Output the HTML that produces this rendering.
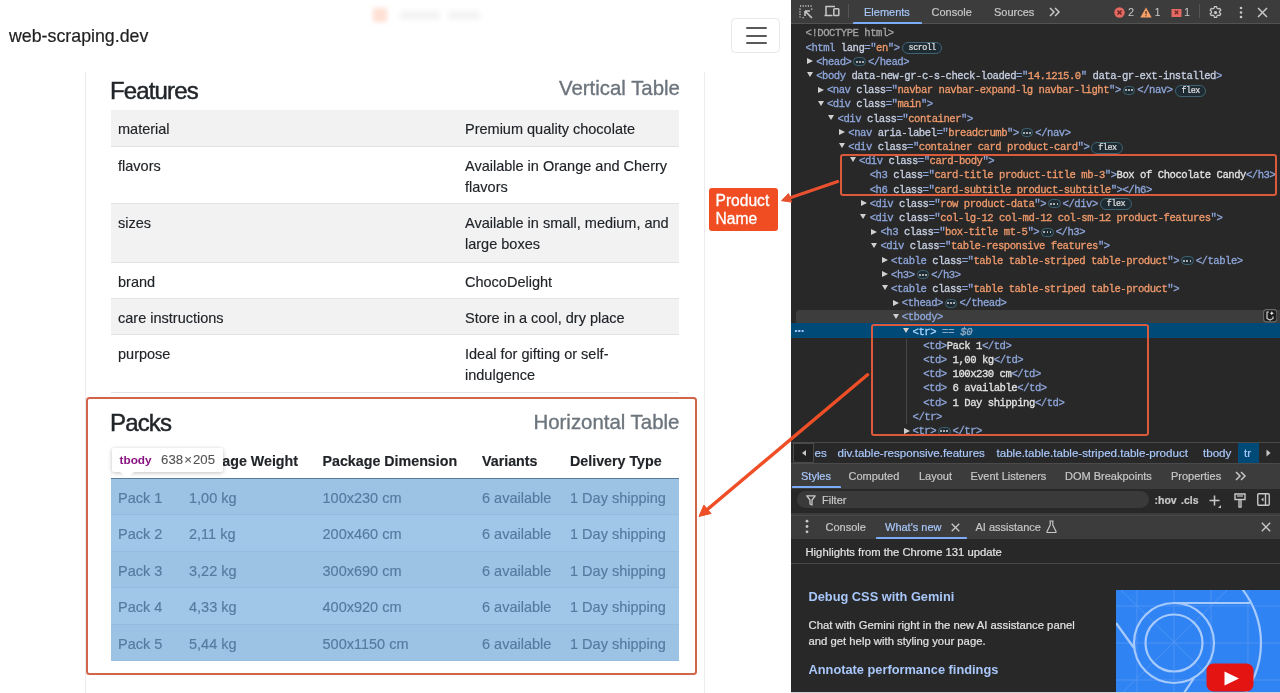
<!DOCTYPE html>
<html><head><meta charset="utf-8">
<style>
*{box-sizing:border-box;margin:0;padding:0}
html,body{width:1280px;height:693px;overflow:hidden;background:#fff}
body{position:relative;font-family:"Liberation Sans",sans-serif;color:#212529}
.a{position:absolute;white-space:pre}
#page{will-change:transform;position:absolute;left:0;top:0;width:791px;height:693px;background:#fff;overflow:hidden}
.brand{left:9px;top:25px;font-size:17.8px;line-height:22px;color:#1f1f1f;-webkit-text-stroke:0.2px currentColor}
.burger{left:731px;top:17.5px;width:49px;height:35px;border:1px solid #e8e8e8;border-radius:4.5px}
.burger i{position:absolute;left:13.5px;width:21px;height:2px;background:#5a5a5a;border-radius:1px}
.cardl{left:85px;top:72px;width:1px;height:621px;background:#ececec}
.cardr{left:703.5px;top:72px;width:1px;height:621px;background:#ececec}
.h3{font-size:24px;line-height:28px;letter-spacing:-0.85px;color:#212529;-webkit-text-stroke:0.45px currentColor}
.h4{font-size:20.4px;line-height:24px;color:#6c757d;-webkit-text-stroke:0.35px currentColor}
.tbl{left:111px;width:567.5px}
.row{position:absolute;left:0;width:567.5px;border-bottom:1px solid #e3e3e3}
.row.s{background:#f2f2f2}
.c{position:absolute;font-size:14.5px;line-height:21px;color:#212529;white-space:pre;-webkit-text-stroke:0.15px currentColor}
.hd{font-weight:bold;font-size:14.25px}
.pk{color:#557b9e}
.tb .row{border-bottom:1px solid #dee2e6}
.ov{position:absolute;left:0;top:0;width:100%;height:100%;background:rgba(111,168,220,.66)}
.pk{z-index:2}
.tip{background:#fff;border-radius:2px;box-shadow:0 1px 4px rgba(0,0,0,.25);font-size:11.8px;line-height:24px;padding-left:8px;z-index:5}
.tip b{color:#881280;font-weight:bold;margin-right:9.5px}
.tip span{color:#555;font-size:13.2px;-webkit-text-stroke:0.1px currentColor}
.tip:after{content:"";position:absolute;left:8.5px;top:24px;border:7.5px solid transparent;border-top:6.8px solid #fff;border-bottom:0}
.redbox{border:2px solid #d2644a;border-radius:3.5px;z-index:6}
.label{background:#f04d22;color:#fff;border-radius:3px;font-size:15.6px;line-height:18px;padding:3.5px 0 0 6.5px;z-index:6;-webkit-text-stroke:0.3px currentColor}

#dt{will-change:transform;position:absolute;left:791px;top:0;width:489px;height:693px;background:#282828;overflow:hidden;font-family:"Liberation Sans",sans-serif}
#dt .ic{position:absolute}
.tb1{position:absolute;left:0;top:0;width:489px;height:23.5px;background:#3c3c3c;border-bottom:1px solid #525252}
.sep{position:absolute;width:1px;background:#555}
.tab{position:absolute;font-size:11px;line-height:13px;color:#c7c7c7;white-space:pre;-webkit-text-stroke:0.2px currentColor}
.tab.act{color:#a8c7fa}
.tab.sm{font-size:10.5px;font-weight:bold}
.uline{position:absolute;height:2px;background:#7cacf8;border-radius:1px 1px 0 0}
.cnt{position:absolute;font-size:11px;line-height:13px;color:#c7c7c7}
#tree{position:absolute;left:-791px;top:0;width:1280px;height:693px}
.ln{position:absolute;left:791px;width:489px;height:14.2px}
.ln.hov{background:#3d3d3d;top:310.1px!important;height:12.5px;left:795.5px;border-radius:4px 0 0 0}
.ln.sel{background:#004a77;top:322.5px!important;height:15.8px}
.seldots{position:absolute;left:795px;top:330px;width:9px;height:2.2px;background:radial-gradient(circle at 1.1px 1.1px,#a8c7fa 1px,transparent 1.2px) 0 0/3.3px 2.2px repeat-x;z-index:2}
.tr{position:absolute;width:0;height:0;border-left:6px solid #d0d0d0;border-top:3.6px solid transparent;border-bottom:3.6px solid transparent}
.td{position:absolute;width:0;height:0;border-top:5.6px solid #d0d0d0;border-left:3.4px solid transparent;border-right:3.4px solid transparent}
.code{position:absolute;font-family:"Liberation Mono",monospace;font-size:10.6px;letter-spacing:-0.48px;line-height:14.2px;-webkit-text-stroke:0.3px currentColor;white-space:pre;color:#e3e3e3}
.code .t{color:#8ea6da}
.code .n{color:#c6cfe2}
.code .v{color:#f09a6c}
.code .x{color:#e3e3e3}
.code .d{color:#a3a3a3}
.code .eq{color:#8fa9c4;font-style:italic;letter-spacing:-0.3px}
.sel+div+.code .t,.sel+.code .t{color:#a8d4ff}
.el{display:inline-flex;align-items:center;justify-content:center;gap:1.3px;vertical-align:middle;width:12.5px;height:9px;border:1px solid #3f6470;background:#1f2b33;border-radius:5px;margin:0 2px 0 2px;position:relative;top:0px;-webkit-text-stroke:0}
.el i{display:block;width:1.8px;height:1.8px;background:#d8d8d8;border-radius:1px}
.bd{display:inline-block;vertical-align:middle;height:12px;line-height:10.5px;border:1px solid #3f6470;background:#1f2b33;border-radius:7px;padding:0 5.5px 0 6px;margin-left:2px;font-size:8.4px;letter-spacing:-0.48px;color:#e0e0e0;position:relative;top:0.5px;-webkit-text-stroke:0.2px currentColor}
.redbox2{position:absolute;border:2px solid #dc5a3c;border-radius:3px;z-index:3}
.bc{position:absolute;left:0;top:441.5px;width:489px;height:22px;background:#282828;border-top:1px solid #4a4a4a;border-bottom:1px solid #4a4a4a}
.bcbtn{position:absolute;left:2px;top:442.5px;width:20.5px;height:20px;border:1px solid #4a4a4a;background:#222;z-index:2}
.bcbtn i{position:absolute;left:8px;top:6.5px;border-right:4px solid #c7c7c7;border-top:3.5px solid transparent;border-bottom:3.5px solid transparent}
.crumb{-webkit-text-stroke:0.2px currentColor;position:absolute;font-size:11.6px;line-height:15px;color:#a8c7fa;white-space:pre}
.crumb .bt{color:#a8c7fa}
.crsel{position:absolute;background:#004a77}
.tb2{position:absolute;left:0;top:463.5px;width:489px;height:25px;background:#3c3c3c}
.fbar{position:absolute;left:0;top:488.5px;width:489px;height:24px;background:#282828}
.fpill{position:absolute;left:5.5px;top:490.6px;width:352px;height:17.6px;border-radius:9px;background:#3a3a3a}
.dsplit{position:absolute;left:0;top:512.5px;width:489px;height:2px;background:#3c3c3c}
.tb3{position:absolute;left:0;top:514.5px;width:489px;height:24.5px;background:#3c3c3c;border-top:1px solid #4a4a4a}
.hl{position:absolute;left:0;top:539px;width:489px;height:24.5px;background:#282828;border-bottom:1px solid #4a4a4a}
.wn div{position:absolute;white-space:pre}
.wh{font-size:12.8px;font-weight:bold;color:#a8c7fa;line-height:16px}
.wp{-webkit-text-stroke:0.2px currentColor;font-size:11.3px;color:#e3e3e3;line-height:16px}
.vid{position:absolute;left:325.3px;top:589.8px;width:164px;height:102px;overflow:hidden}
.botl{position:absolute;left:0;top:691.6px;width:489px;height:1.4px;background:#cfd3d8}
</style></head><body>
<div id="page">
  <div class="a" style="left:373px;top:8px;width:14px;height:14px;background:#ffe0d5;filter:blur(2.2px)"></div>
  <div class="a" style="left:400px;top:10.5px;width:40px;height:9px;background:#f4f4f4;filter:blur(2.5px)"></div>
  <div class="a" style="left:448px;top:10.5px;width:32px;height:9px;background:#f4f4f4;filter:blur(2.5px)"></div>
  <div class="a brand">web-scraping.dev</div>
  <div class="a burger"><i style="top:8.9px"></i><i style="top:16.1px"></i><i style="top:23.3px"></i></div>
  <div class="a cardl"></div><div class="a cardr"></div>

  <div class="a h3" style="left:110px;top:76.5px">Features</div>
  <div class="a h4" style="left:559px;top:76px">Vertical Table</div>

  <div class="a tbl" style="top:110px;height:283px">
    <div class="row s" style="top:0;height:36.5px"><span class="c" style="left:7px;top:9.2px">material</span><span class="c" style="left:354px;top:9.2px">Premium quality chocolate</span></div>
    <div class="row" style="top:36.5px;height:57.5px"><span class="c" style="left:7px;top:9.2px">flavors</span><span class="c" style="left:354px;top:9.2px">Available in Orange and Cherry
flavors</span></div>
    <div class="row s" style="top:94px;height:58.5px"><span class="c" style="left:7px;top:9.2px">sizes</span><span class="c" style="left:354px;top:9.2px">Available in small, medium, and
large boxes</span></div>
    <div class="row" style="top:152.5px;height:36px"><span class="c" style="left:7px;top:9.2px">brand</span><span class="c" style="left:354px;top:9.2px">ChocoDelight</span></div>
    <div class="row s" style="top:188.5px;height:36.5px"><span class="c" style="left:7px;top:9.2px">care instructions</span><span class="c" style="left:354px;top:9.2px">Store in a cool, dry place</span></div>
    <div class="row" style="top:225px;height:57.5px"><span class="c" style="left:7px;top:9.2px">purpose</span><span class="c" style="left:354px;top:9.2px">Ideal for gifting or self-
indulgence</span></div>
  </div>
  <div class="a h3" style="left:110px;top:409px">Packs</div>
  <div class="a h4" style="left:533.5px;top:409.5px">Horizontal Table</div>
  <div class="a" style="left:111px;top:444px;width:567.5px;height:34.5px"></div>
  <div class="a" style="left:111px;top:477.8px;width:567.5px;height:1.6px;background:#5a7d9e;z-index:3"></div>
  <span class="c hd" style="left:118px;top:451px">Package</span>
  <span class="c hd" style="left:189px;top:451px">Package Weight</span>
  <span class="c hd" style="left:322.5px;top:451px">Package Dimension</span>
  <span class="c hd" style="left:482px;top:451px">Variants</span>
  <span class="c hd" style="left:570px;top:451px">Delivery Type</span>
  <div class="a tb" style="left:111px;top:478.5px;width:567.5px;height:182.5px">
    <div class="row s" style="top:0;height:36.5px"></div>
    <div class="row" style="top:36.5px;height:36.5px"></div>
    <div class="row s" style="top:73px;height:36.5px"></div>
    <div class="row" style="top:109.5px;height:36.5px"></div>
    <div class="row s" style="top:146px;height:36.5px"></div>
    <div class="ov"></div>
  </div>
  <span class="c pk" style="left:118px;top:487.7px">Pack 1</span><span class="c pk" style="left:189px;top:487.7px">1,00 kg</span><span class="c pk" style="left:322.5px;top:487.7px">100x230 cm</span><span class="c pk" style="left:482px;top:487.7px">6 available</span><span class="c pk" style="left:570px;top:487.7px">1 Day shipping</span>
  <span class="c pk" style="left:118px;top:524.2px">Pack 2</span><span class="c pk" style="left:189px;top:524.2px">2,11 kg</span><span class="c pk" style="left:322.5px;top:524.2px">200x460 cm</span><span class="c pk" style="left:482px;top:524.2px">6 available</span><span class="c pk" style="left:570px;top:524.2px">1 Day shipping</span>
  <span class="c pk" style="left:118px;top:560.7px">Pack 3</span><span class="c pk" style="left:189px;top:560.7px">3,22 kg</span><span class="c pk" style="left:322.5px;top:560.7px">300x690 cm</span><span class="c pk" style="left:482px;top:560.7px">6 available</span><span class="c pk" style="left:570px;top:560.7px">1 Day shipping</span>
  <span class="c pk" style="left:118px;top:597.2px">Pack 4</span><span class="c pk" style="left:189px;top:597.2px">4,33 kg</span><span class="c pk" style="left:322.5px;top:597.2px">400x920 cm</span><span class="c pk" style="left:482px;top:597.2px">6 available</span><span class="c pk" style="left:570px;top:597.2px">1 Day shipping</span>
  <span class="c pk" style="left:118px;top:633.7px">Pack 5</span><span class="c pk" style="left:189px;top:633.7px">5,44 kg</span><span class="c pk" style="left:322.5px;top:633.7px">500x1150 cm</span><span class="c pk" style="left:482px;top:633.7px">6 available</span><span class="c pk" style="left:570px;top:633.7px">1 Day shipping</span>

  <div class="a tip" style="left:111.5px;top:447.5px;width:111.5px;height:24px"><b>tbody</b><span>638&#8202;×&#8202;205</span></div>
  <div class="a redbox" style="left:86px;top:396.5px;width:610.5px;height:278.5px"></div>
  <div class="a label" style="left:709px;top:188px;width:69px;height:43px">Product
Name</div>
</div>
<!--DT-->
<div id="dt">
  <div class="tb1"></div>
  <!-- toolbar icons -->
  <svg class="ic" style="left:8px;top:4.5px" width="15" height="15" viewBox="0 0 15 15"><g fill="none" stroke="#c7c7c7" stroke-width="1.4"><path d="M1 1h1.2M3.6 1h1.2M6.2 1h1.2M8.8 1h1.2M11.4 1h1.2M1 3.6v1.2M1 6.2v1.2M1 8.8v1.2M1 11.4v1.2M3.6 12.6h1.2M12.6 3.6v1.2" /><path d="M6 6l7 7M6 6h5M6 6v5" stroke-width="1.6"/></g></svg>
  <svg class="ic" style="left:32.5px;top:5px" width="16" height="12" viewBox="0 0 16 12"><g fill="none" stroke="#c7c7c7" stroke-width="1.5"><path d="M2 10.5V1.5h9"/><path d="M0.5 10.5h8"/><rect x="9.8" y="3.8" width="5" height="6.7" rx="0.8"/></g></svg>
  <div class="sep" style="left:56.5px;top:4px;height:14px"></div>
  <div class="tab act" style="left:73px;top:5.6px">Elements</div>
  <div class="uline" style="left:62px;top:21.5px;width:68.5px"></div>
  <div class="tab" style="left:140.5px;top:5.6px">Console</div>
  <div class="tab" style="left:203px;top:5.6px">Sources</div>
  <svg class="ic" style="left:258px;top:7px" width="12" height="10" viewBox="0 0 12 10"><path d="M1 1l4 4-4 4M6 1l4 4-4 4" fill="none" stroke="#c7c7c7" stroke-width="1.5"/></svg>
  <svg class="ic" style="left:322.5px;top:7px" width="11" height="11" viewBox="0 0 11 11"><circle cx="5.5" cy="5.5" r="5.2" fill="#e46962"/><path d="M3.5 3.5l4 4M7.5 3.5l-4 4" stroke="#5c1e1b" stroke-width="1.2"/></svg>
  <div class="cnt" style="left:337px;top:6.3px">2</div>
  <svg class="ic" style="left:349px;top:7px" width="12" height="11" viewBox="0 0 12 11"><path d="M6 0.5L11.7 10.5H0.3z" fill="#f6a16a"/><path d="M6 4v3.2M6 8.3v1" stroke="#4a2a10" stroke-width="1.2"/></svg>
  <div class="cnt" style="left:363.5px;top:6.3px">1</div>
  <svg class="ic" style="left:379.5px;top:7.5px" width="11" height="10" viewBox="0 0 11 10"><path d="M0.5 1h10v8h-10z" fill="#e46962"/><path d="M3.8 2.7l3.4 3.4M7.2 2.7l-3.4 3.4" stroke="#5c1e1b" stroke-width="1.1"/></svg>
  <div class="cnt" style="left:393px;top:6.3px">1</div>
  <div class="sep" style="left:408px;top:4px;height:14px"></div>
  <svg class="ic" style="left:417px;top:4.5px" width="15" height="15" viewBox="0 0 24 24"><path fill="none" stroke="#c7c7c7" stroke-width="2" d="M10.3 2.5h3.4l.6 2.6 1.9 1.1 2.6-.8 1.7 2.9-2 1.8v2.2l2 1.8-1.7 2.9-2.6-.8-1.9 1.1-.6 2.6h-3.4l-.6-2.6-1.9-1.1-2.6.8-1.7-2.9 2-1.8v-2.2l-2-1.8 1.7-2.9 2.6.8 1.9-1.1z"/><circle cx="12" cy="12" r="2.6" fill="#c7c7c7"/></svg>
  <svg class="ic" style="left:447.5px;top:5.5px" width="4" height="13" viewBox="0 0 4 13"><circle cx="2" cy="2" r="1.3" fill="#c7c7c7"/><circle cx="2" cy="6.5" r="1.3" fill="#c7c7c7"/><circle cx="2" cy="11" r="1.3" fill="#c7c7c7"/></svg>
  <svg class="ic" style="left:466px;top:6.5px" width="11" height="11" viewBox="0 0 11 11"><path d="M1 1l9 9M10 1l-9 9" stroke="#c7c7c7" stroke-width="1.5"/></svg>

  <div id="tree">
<div class="ln" style="top:26.30px"></div>
<div class="code" style="left:805.50px;top:26.30px"><span class="d">&lt;!DOCTYPE html&gt;</span></div>
<div class="ln" style="top:40.50px"></div>
<div class="code" style="left:805.50px;top:40.50px"><span class="t">&lt;html</span><span class="t"> </span><span class="n">lang</span><span class="t">=&quot;</span><span class="v">en</span><span class="t">&quot;</span><span class="t">&gt;</span><span class="bd">scroll</span></div>
<div class="ln" style="top:54.70px"></div>
<div class="tr" style="left:807.20px;top:58.30px"></div>
<div class="code" style="left:816.20px;top:54.70px"><span class="t">&lt;head</span><span class="t">&gt;</span><span class="el"><i></i><i></i><i></i></span><span class="t">&lt;/head&gt;</span></div>
<div class="ln" style="top:68.90px"></div>
<div class="td" style="left:806.90px;top:72.10px"></div>
<div class="code" style="left:816.20px;top:68.90px"><span class="t">&lt;body</span><span class="t"> </span><span class="n">data-new-gr-c-s-check-loaded</span><span class="t">=&quot;</span><span class="v">14.1215.0</span><span class="t">&quot;</span><span class="t"> </span><span class="n">data-gr-ext-installed</span><span class="t">&gt;</span></div>
<div class="ln" style="top:83.10px"></div>
<div class="tr" style="left:817.90px;top:86.70px"></div>
<div class="code" style="left:826.90px;top:83.10px"><span class="t">&lt;nav</span><span class="t"> </span><span class="n">class</span><span class="t">=&quot;</span><span class="v">navbar navbar-expand-lg navbar-light</span><span class="t">&quot;</span><span class="t">&gt;</span><span class="el"><i></i><i></i><i></i></span><span class="t">&lt;/nav&gt;</span><span class="bd">flex</span></div>
<div class="ln" style="top:97.30px"></div>
<div class="td" style="left:817.60px;top:100.50px"></div>
<div class="code" style="left:826.90px;top:97.30px"><span class="t">&lt;div</span><span class="t"> </span><span class="n">class</span><span class="t">=&quot;</span><span class="v">main</span><span class="t">&quot;</span><span class="t">&gt;</span></div>
<div class="ln" style="top:111.50px"></div>
<div class="td" style="left:828.30px;top:114.70px"></div>
<div class="code" style="left:837.60px;top:111.50px"><span class="t">&lt;div</span><span class="t"> </span><span class="n">class</span><span class="t">=&quot;</span><span class="v">container</span><span class="t">&quot;</span><span class="t">&gt;</span></div>
<div class="ln" style="top:125.70px"></div>
<div class="tr" style="left:839.30px;top:129.30px"></div>
<div class="code" style="left:848.30px;top:125.70px"><span class="t">&lt;nav</span><span class="t"> </span><span class="n">aria-label</span><span class="t">=&quot;</span><span class="v">breadcrumb</span><span class="t">&quot;</span><span class="t">&gt;</span><span class="el"><i></i><i></i><i></i></span><span class="t">&lt;/nav&gt;</span></div>
<div class="ln" style="top:139.90px"></div>
<div class="td" style="left:839.00px;top:143.10px"></div>
<div class="code" style="left:848.30px;top:139.90px"><span class="t">&lt;div</span><span class="t"> </span><span class="n">class</span><span class="t">=&quot;</span><span class="v">container card product-card</span><span class="t">&quot;</span><span class="t">&gt;</span><span class="bd">flex</span></div>
<div class="ln" style="top:154.10px"></div>
<div class="td" style="left:849.70px;top:157.30px"></div>
<div class="code" style="left:859.00px;top:154.10px"><span class="t">&lt;div</span><span class="t"> </span><span class="n">class</span><span class="t">=&quot;</span><span class="v">card-body</span><span class="t">&quot;</span><span class="t">&gt;</span></div>
<div class="ln" style="top:168.30px"></div>
<div class="code" style="left:869.70px;top:168.30px"><span class="t">&lt;h3</span><span class="t"> </span><span class="n">class</span><span class="t">=&quot;</span><span class="v">card-title product-title mb-3</span><span class="t">&quot;</span><span class="t">&gt;</span><span class="x">Box of Chocolate Candy</span><span class="t">&lt;/h3&gt;</span></div>
<div class="ln" style="top:182.50px"></div>
<div class="code" style="left:869.70px;top:182.50px"><span class="t">&lt;h6</span><span class="t"> </span><span class="n">class</span><span class="t">=&quot;</span><span class="v">card-subtitle product-subtitle</span><span class="t">&quot;</span><span class="t">&gt;</span><span class="t">&lt;/h6&gt;</span></div>
<div class="ln" style="top:196.70px"></div>
<div class="tr" style="left:860.70px;top:200.30px"></div>
<div class="code" style="left:869.70px;top:196.70px"><span class="t">&lt;div</span><span class="t"> </span><span class="n">class</span><span class="t">=&quot;</span><span class="v">row product-data</span><span class="t">&quot;</span><span class="t">&gt;</span><span class="el"><i></i><i></i><i></i></span><span class="t">&lt;/div&gt;</span><span class="bd">flex</span></div>
<div class="ln" style="top:210.90px"></div>
<div class="td" style="left:860.40px;top:214.10px"></div>
<div class="code" style="left:869.70px;top:210.90px"><span class="t">&lt;div</span><span class="t"> </span><span class="n">class</span><span class="t">=&quot;</span><span class="v">col-lg-12 col-md-12 col-sm-12 product-features</span><span class="t">&quot;</span><span class="t">&gt;</span></div>
<div class="ln" style="top:225.10px"></div>
<div class="tr" style="left:871.40px;top:228.70px"></div>
<div class="code" style="left:880.40px;top:225.10px"><span class="t">&lt;h3</span><span class="t"> </span><span class="n">class</span><span class="t">=&quot;</span><span class="v">box-title mt-5</span><span class="t">&quot;</span><span class="t">&gt;</span><span class="el"><i></i><i></i><i></i></span><span class="t">&lt;/h3&gt;</span></div>
<div class="ln" style="top:239.30px"></div>
<div class="td" style="left:871.10px;top:242.50px"></div>
<div class="code" style="left:880.40px;top:239.30px"><span class="t">&lt;div</span><span class="t"> </span><span class="n">class</span><span class="t">=&quot;</span><span class="v">table-responsive features</span><span class="t">&quot;</span><span class="t">&gt;</span></div>
<div class="ln" style="top:253.50px"></div>
<div class="tr" style="left:882.10px;top:257.10px"></div>
<div class="code" style="left:891.10px;top:253.50px"><span class="t">&lt;table</span><span class="t"> </span><span class="n">class</span><span class="t">=&quot;</span><span class="v">table table-striped table-product</span><span class="t">&quot;</span><span class="t">&gt;</span><span class="el"><i></i><i></i><i></i></span><span class="t">&lt;/table&gt;</span></div>
<div class="ln" style="top:267.70px"></div>
<div class="tr" style="left:882.10px;top:271.30px"></div>
<div class="code" style="left:891.10px;top:267.70px"><span class="t">&lt;h3</span><span class="t">&gt;</span><span class="el"><i></i><i></i><i></i></span><span class="t">&lt;/h3&gt;</span></div>
<div class="ln" style="top:281.90px"></div>
<div class="td" style="left:881.80px;top:285.10px"></div>
<div class="code" style="left:891.10px;top:281.90px"><span class="t">&lt;table</span><span class="t"> </span><span class="n">class</span><span class="t">=&quot;</span><span class="v">table table-striped table-product</span><span class="t">&quot;</span><span class="t">&gt;</span></div>
<div class="ln" style="top:296.10px"></div>
<div class="tr" style="left:892.80px;top:299.70px"></div>
<div class="code" style="left:901.80px;top:296.10px"><span class="t">&lt;thead</span><span class="t">&gt;</span><span class="el"><i></i><i></i><i></i></span><span class="t">&lt;/thead&gt;</span></div>
<div class="ln hov" style="top:310.30px"></div>
<div class="td" style="left:892.50px;top:313.50px"></div>
<div class="code" style="left:901.80px;top:310.30px"><span class="t">&lt;tbody</span><span class="t">&gt;</span></div>
<div class="ln sel" style="top:324.50px"></div>
<div class="td" style="left:903.20px;top:327.70px"></div>
<div class="code" style="left:912.50px;top:324.50px"><span class="t">&lt;tr</span><span class="t">&gt;</span><span class="eq"> == $0</span></div>
<div class="ln" style="top:338.70px"></div>
<div class="code" style="left:923.20px;top:338.70px"><span class="t">&lt;td</span><span class="t">&gt;</span><span class="x">Pack 1</span><span class="t">&lt;/td&gt;</span></div>
<div class="ln" style="top:352.90px"></div>
<div class="code" style="left:923.20px;top:352.90px"><span class="t">&lt;td</span><span class="t">&gt;</span><span class="x"> 1,00 kg</span><span class="t">&lt;/td&gt;</span></div>
<div class="ln" style="top:367.10px"></div>
<div class="code" style="left:923.20px;top:367.10px"><span class="t">&lt;td</span><span class="t">&gt;</span><span class="x"> 100x230 cm</span><span class="t">&lt;/td&gt;</span></div>
<div class="ln" style="top:381.30px"></div>
<div class="code" style="left:923.20px;top:381.30px"><span class="t">&lt;td</span><span class="t">&gt;</span><span class="x"> 6 available</span><span class="t">&lt;/td&gt;</span></div>
<div class="ln" style="top:395.50px"></div>
<div class="code" style="left:923.20px;top:395.50px"><span class="t">&lt;td</span><span class="t">&gt;</span><span class="x"> 1 Day shipping</span><span class="t">&lt;/td&gt;</span></div>
<div class="ln" style="top:409.70px"></div>
<div class="code" style="left:912.50px;top:409.70px"><span class="t">&lt;/tr&gt;</span></div>
<div class="ln" style="top:423.90px"></div>
<div class="tr" style="left:903.50px;top:427.50px"></div>
<div class="code" style="left:912.50px;top:423.90px"><span class="t">&lt;tr</span><span class="t">&gt;</span><span class="el"><i></i><i></i><i></i></span><span class="t">&lt;/tr&gt;</span></div>
  <div class="seldots"></div>
  <svg style="position:absolute;left:1262.5px;top:309px;z-index:2" width="14.5" height="13.5" viewBox="0 0 14.5 13.5"><rect x="0.6" y="0.6" width="13.3" height="12.3" rx="3" fill="#1c1c1c" stroke="#6a6a6a" stroke-width="1.1"/><path d="M6 3H4v6.5l3 1.5 3-1.5V7.5" fill="none" stroke="#d0d0d0" stroke-width="1.2"/><path d="M8.8 2.3l.7 1.3 1.3.7-1.3.7-.7 1.3-.7-1.3-1.3-.7 1.3-.7z" fill="#e8e8e8"/></svg>
  <div class="guide" style="position:absolute;left:905.5px;top:338.5px;width:1px;height:85px;background:#474747"></div>
  </div>
  <div class="redbox2" style="left:49px;top:154px;width:437px;height:42px"></div>
  <div class="redbox2" style="left:80px;top:323.5px;width:277.5px;height:112px"></div>

  <!-- breadcrumbs -->
  <div class="bc"></div>
  <div class="bcbtn"><i></i></div>
  <div class="crumb" style="left:23.5px;top:445px">es</div>
  <div class="crumb" style="left:46.5px;top:445px"><span class="bt">div</span>.table-responsive.features</div>
  <div class="crumb" style="left:205.5px;top:445px"><span class="bt">table</span>.table.table-striped.table-product</div>
  <div class="crumb" style="left:412px;top:445px"><span class="bt">tbody</span></div>
  <div class="crsel" style="left:447px;top:442.5px;width:21px;height:20.5px"></div>
  <div class="crumb" style="left:453px;top:445px"><span class="bt" style="color:#a8c7fa">tr</span></div>
  <svg class="ic" style="left:475px;top:449px" width="5" height="8" viewBox="0 0 5 8"><path d="M0.5 0.5L4.5 4 0.5 7.5z" fill="#c7c7c7"/></svg>

  <!-- styles tabs -->
  <div class="tb2"></div>
  <div class="tab act" style="left:10px;top:470px">Styles</div>
  <div class="uline" style="left:1px;top:486px;width:48.5px"></div>
  <div class="tab" style="left:57.5px;top:470px">Computed</div>
  <div class="tab" style="left:128px;top:470px">Layout</div>
  <div class="tab" style="left:179.5px;top:470px">Event Listeners</div>
  <div class="tab" style="left:274px;top:470px">DOM Breakpoints</div>
  <div class="tab" style="left:380px;top:470px">Properties</div>
  <svg class="ic" style="left:444px;top:471px" width="12" height="10" viewBox="0 0 12 10"><path d="M1 1l4 4-4 4M6 1l4 4-4 4" fill="none" stroke="#c7c7c7" stroke-width="1.5"/></svg>

  <!-- filter -->
  <div class="fbar"></div>
  <div class="fpill"></div>
  <svg class="ic" style="left:14.5px;top:495px" width="10" height="11" viewBox="0 0 10 11"><path d="M0.8 0.8h8.4L6 5v5L4 9V5z" fill="none" stroke="#c7c7c7" stroke-width="1.3" stroke-linejoin="round"/></svg>
  <div class="tab" style="left:31px;top:493.5px;color:#c7c7c7">Filter</div>
  <div class="tab sm" style="left:363.5px;top:493.5px">:hov</div>
  <div class="tab sm" style="left:390px;top:493.5px">.cls</div>
  <svg class="ic" style="left:417px;top:493.5px" width="15" height="15" viewBox="0 0 15 15"><path d="M6.5 1.5v10M1.5 6.5h10" stroke="#c7c7c7" stroke-width="1.5"/><path d="M13 11v3h-3z" fill="#c7c7c7"/></svg>
  <svg class="ic" style="left:442.5px;top:492.5px" width="12" height="15" viewBox="0 0 12 15"><path d="M1 1h10v5.5H1z M5 6.5h2v7.5H5z" fill="none" stroke="#c7c7c7" stroke-width="1.4"/><path d="M3 3h6" stroke="#c7c7c7" stroke-width="1.2"/></svg>
  <svg class="ic" style="left:465.5px;top:493px" width="13" height="13" viewBox="0 0 13 13"><rect x="0.75" y="0.75" width="11.5" height="11.5" rx="1" fill="none" stroke="#c7c7c7" stroke-width="1.4"/><path d="M8.5 1v11" stroke="#c7c7c7" stroke-width="1.4"/><path d="M6.5 4.5L4.2 6.5 6.5 8.5z" fill="#c7c7c7"/></svg>

  <!-- drawer -->
  <div class="dsplit"></div>
  <div class="tb3"></div>
  <svg class="ic" style="left:14px;top:519px" width="4" height="15" viewBox="0 0 4 15"><circle cx="2" cy="2.2" r="1.4" fill="#c7c7c7"/><circle cx="2" cy="7.5" r="1.4" fill="#c7c7c7"/><circle cx="2" cy="12.8" r="1.4" fill="#c7c7c7"/></svg>
  <div class="tab" style="left:34.5px;top:521px">Console</div>
  <div class="tab act" style="left:94px;top:521px">What's new</div>
  <svg class="ic" style="left:160px;top:522.5px" width="9" height="9" viewBox="0 0 9 9"><path d="M0.7 0.7l7.6 7.6M8.3 0.7L0.7 8.3" stroke="#c7c7c7" stroke-width="1.3"/></svg>
  <div class="uline" style="left:85px;top:537px;width:91px"></div>
  <div class="tab" style="left:184.5px;top:521px">AI assistance</div>
  <svg class="ic" style="left:255px;top:520px" width="11" height="13" viewBox="0 0 11 13"><path d="M3.5 1h4M4.2 1v4L1 11.5c-.3.6 0 1 .6 1h7.8c.6 0 .9-.4.6-1L6.8 5V1" fill="none" stroke="#c7c7c7" stroke-width="1.2" stroke-linejoin="round"/></svg>
  <svg class="ic" style="left:469.5px;top:522px" width="10" height="10" viewBox="0 0 10 10"><path d="M0.8 0.8l8.4 8.4M9.2 0.8L0.8 9.2" stroke="#c7c7c7" stroke-width="1.4"/></svg>

  <div class="hl"></div>
  <div class="tab" style="left:14.5px;top:545.5px;font-size:11.25px;color:#e3e3e3">Highlights from the Chrome 131 update</div>
  <div class="wn">
    <div class="wh" style="left:17.5px;top:588.5px">Debug CSS with Gemini</div>
    <div class="wp" style="left:17.5px;top:617px">Chat with Gemini right in the new AI assistance panel</div>
    <div class="wp" style="left:17.5px;top:633px">and get help with styling your page.</div>
    <div class="wh" style="left:17.5px;top:662px">Annotate performance findings</div>
  </div>
  <div class="botl"></div>
  <div class="vid">
    <svg width="164" height="104" viewBox="0 0 164 104" style="position:absolute;left:0;top:0">
      <rect width="164" height="104" fill="#3083f3"/>
      <g stroke="#5598f5" stroke-width="0.8" fill="none">
        <path d="M0 16H164M0 53H164M0 90H164M21 0V104M58 0V104M95 0V104M132 0V104"/>
        <path d="M5 0L111 104M111 0L5 104"/>
      </g>
      <g stroke="#a6cafc" stroke-width="2.2" fill="none">
        <circle cx="58" cy="53" r="40"/>
        <circle cx="58" cy="53" r="28.5"/>
        <circle cx="58" cy="53" r="87"/>
        <path d="M58 13H134M0 33L18 58M78 88L50 130"/>
      </g>
      <rect x="90.5" y="73.5" width="47" height="28" rx="7" fill="#e31412"/>
      <path d="M108.5 81.5L123 88.5 108.5 95.5z" fill="#fff"/>
    </svg>
  </div>
</div>

<!--/DT-->
<svg id="arrows" width="1280" height="693" viewBox="0 0 1280 693" style="position:absolute;left:0;top:0;z-index:50;pointer-events:none"><path d="M837.8 181.5L786.6 199.0" stroke="#e9512e" stroke-width="3" stroke-linecap="round"/><path d="M781.5 200.7L788.6 193.5L791.5 202.1z" fill="#e9512e" stroke="#e9512e" stroke-width="1" stroke-linejoin="round"/><path d="M867.5 374.7L704.1 512.2" stroke="#ee4f26" stroke-width="3.4" stroke-linecap="round"/><path d="M699.0 516.4L703.9 505.1L711.0 513.5z" fill="#ee4f26" stroke="#ee4f26" stroke-width="1" stroke-linejoin="round"/></svg>

</body></html>
